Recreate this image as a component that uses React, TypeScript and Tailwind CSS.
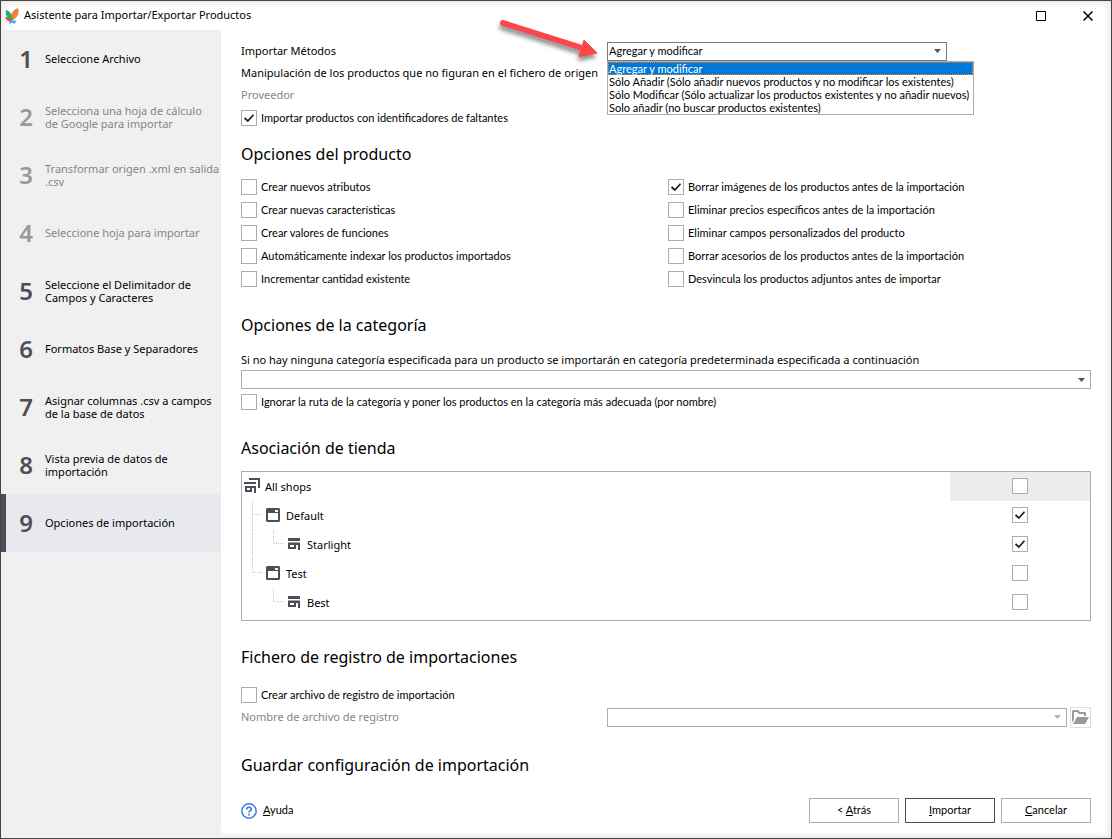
import { useState } from "react";
import type { ReactNode } from "react";

const steps = [
  { id: 1, label: "Seleccione Archivo", enabled: true },
  { id: 2, label: "Selecciona una hoja de cálculo\nde Google para importar", enabled: false },
  { id: 3, label: "Transformar origen .xml en salida .csv", enabled: false },
  { id: 4, label: "Seleccione hoja para importar", enabled: false },
  { id: 5, label: "Seleccione el Delimitador de Campos y Caracteres", enabled: true },
  { id: 6, label: "Formatos Base y Separadores", enabled: true },
  { id: 7, label: "Asignar columnas .csv a campos de la base de datos", enabled: true },
  { id: 8, label: "Vista previa de datos de importación", enabled: true },
  { id: 9, label: "Opciones de importación", enabled: true },
];

const methods = [
  "Agregar y modificar",
  "Sólo Añadir (Sólo añadir nuevos productos y no modificar los existentes)",
  "Sólo Modificar (Sólo actualizar los productos existentes y no añadir nuevos)",
  "Solo añadir (no buscar productos existentes)",
];

const productLeft = [
  "Crear nuevos atributos",
  "Crear nuevas características",
  "Crear valores de funciones",
  "Automáticamente indexar los productos importados",
  "Incrementar cantidad existente",
];

const productRight = [
  "Borrar imágenes de los productos antes de la importación",
  "Eliminar precios específicos antes de la importación",
  "Eliminar campos personalizados del producto",
  "Borrar acesorios de los productos antes de la importación",
  "Desvincula los productos adjuntos antes de importar",
];

// guides: one entry per indent level in front of the icon
const shops = [
  { name: "All shops", icon: "all", guides: [], checked: false },
  { name: "Default", icon: "group", guides: ["tee"], checked: true },
  { name: "Starlight", icon: "shop", guides: ["line", "elbow"], checked: true },
  { name: "Test", icon: "group", guides: ["elbow"], checked: false },
  { name: "Best", icon: "shop", guides: ["none", "elbow"], checked: false },
];

const guidePaths: Record<string, string> = {
  tee: "M10.5 0V29M10.5 13.5H20",
  line: "M10.5 0V29",
  elbow: "M10.5 0V13.5H20",
  none: "",
};

function CheckBox({ checked = false, label }: { checked?: boolean; label?: string }) {
  return (
    <span className="grid size-4 shrink-0">
      <input
        type="checkbox"
        defaultChecked={checked}
        aria-label={label}
        className="peer col-start-1 row-start-1 size-4 appearance-none border border-[#acacac] bg-white"
      />
      <svg viewBox="0 0 16 16" className="pointer-events-none invisible col-start-1 row-start-1 size-4 peer-checked:visible">
        <path d="M3.5 8L6.8 11L12.5 4.7" fill="none" stroke="#1e1e1e" strokeWidth="1.7" />
      </svg>
    </span>
  );
}

function CheckRow({ children, checked }: { children: ReactNode; checked?: boolean }) {
  return (
    <label className="flex h-4 items-center gap-1 font-[Lato,sans-serif] whitespace-nowrap">
      <CheckBox checked={checked} />
      <span className="pb-0.5">{children}</span>
    </label>
  );
}

function Caret({ muted = false }: { muted?: boolean }) {
  return (
    <svg viewBox="0 0 7 4" className={`pointer-events-none col-start-1 row-start-1 mr-1.5 h-1 w-[7px] self-center justify-self-end ${muted ? "text-[#b5b5b5]" : "text-[#555555]"}`}>
      <path d="M0 0H7L3.5 4Z" fill="currentColor" />
    </svg>
  );
}

function ShopIcon({ kind }: { kind: string }) {
  if (kind === "all") {
    return (
      <svg viewBox="0 0 16 15" className="h-[15px] w-4">
        <path d="M5 0H16V10H14V2H5ZM0 4H12V6H0ZM1 8H12V15H10V10H8V14H1ZM3 10V12H6V10Z" fill="#4e4d58" fillRule="evenodd" />
      </svg>
    );
  }
  if (kind === "group") {
    return (
      <svg viewBox="0 0 14 14" className="size-3.5">
        <path d="M1 0H13L14 1V13L13 14H1L0 13V1ZM2 5V12H12V5ZM9 2V4H12V2Z" fill="#4e4d58" fillRule="evenodd" />
      </svg>
    );
  }
  return (
    <svg viewBox="0 0 12 12" className="size-3">
      <path d="M0 0H12V3H0ZM0 4.5H12V12H10V7H8V11H0V4.5ZM2 7V9H6V7Z" fill="#4e4d58" fillRule="evenodd" />
    </svg>
  );
}

function Heading({ children }: { children: ReactNode }) {
  return <h2 className="text-[16px] leading-6">{children}</h2>;
}

export default function App() {
  const [method, setMethod] = useState(methods[0]);

  return (
    <div className="flex min-h-screen flex-col border border-[#444444] bg-white font-['Noto_Sans',sans-serif] text-[11px] leading-[13px] text-black shadow-[inset_0_0_8px_rgba(0,0,0,0.15)]">
      <header className="flex h-[29px] items-center pl-1">
        <svg viewBox="0 0 14 16" className="h-4 w-3.5">
          <path d="M13 0C15 6 12 10 7 12.5C4.5 8 7 2 13 0Z" fill="#f58233" />
          <path d="M1 2C5 3 8 7 7 12.5C2 11 0 7 1 2Z" fill="#1fae7c" />
          <path d="M0 9C3 9 5.5 10.5 7 12.5C5 14.5 1 13 0 9Z" fill="#ef4a3c" />
          <path d="M7 12.5L11.5 12.5L9.5 16L7 14.5L5 16L3.5 14Z" fill="#3fb4ea" />
        </svg>
        <h1 className="ml-[5px] flex-1 pb-[3px]">Asistente para Importar/Exportar Productos</h1>
        <button aria-label="Maximizar" className="flex h-7 w-12 items-center justify-center">
          <svg viewBox="0 0 10 10" className="size-2.5">
            <path d="M.5 .5H9.5V9.5H.5Z" fill="none" stroke="#000" />
          </svg>
        </button>
        <button aria-label="Cerrar" className="flex h-7 w-[46px] items-center justify-center">
          <svg viewBox="0 0 10 10" className="size-2.5">
            <path d="M.5 .5L9.5 9.5M9.5 .5L.5 9.5" fill="none" stroke="#000" strokeWidth="1.5" />
          </svg>
        </button>
      </header>

      <div className="flex flex-1">
        <nav className="w-[220px] shrink-0 bg-[#f0f0f0]">
          <ol>
            {steps.map((s) => (
              <li
                key={s.id}
                className={`flex h-[58px] items-center border-l-5 pb-px ${s.id === 9 ? "border-[#4e4d58] bg-[#e9e8ef]" : "border-transparent"} ${s.enabled ? "text-black" : "text-[#858585]"}`}
              >
                <span className={`w-10 shrink-0 text-center text-[24px] leading-7 font-semibold ${s.enabled ? "text-[#4e4d58]" : "text-[#999999]"}`}>{s.id}</span>
                <span className="-ml-px whitespace-pre-line">{s.label}</span>
              </li>
            ))}
          </ol>
        </nav>

        <main className="min-w-0 flex-1 px-5 pt-2.5 pb-[15px]">
          <div className="grid grid-cols-[366px_340px]">
            <label htmlFor="method" className="flex h-[22px] items-center pb-0.5">Importar Métodos</label>
            <div className="relative grid h-[19px] grid-cols-1 self-center">
              <select
                id="method"
                value={method}
                onChange={(e) => setMethod(e.target.value)}
                className="col-start-1 row-start-1 w-full min-w-0 appearance-none border border-[#7a7a7a] bg-white px-px pb-px font-[Lato,sans-serif]"
              >
                {methods.map((m) => (
                  <option key={m}>{m}</option>
                ))}
              </select>
              <Caret />
              <ul role="listbox" aria-label="Importar Métodos" className="absolute top-full left-0 z-10 w-[367px] border border-[#acacac] bg-white font-[Lato,sans-serif] whitespace-nowrap">
                {methods.map((m) => (
                  <li
                    key={m}
                    role="option"
                    aria-selected={m === method}
                    onClick={() => setMethod(m)}
                    className={`h-[13px] pl-px ${m === method ? "bg-[#0078d7] text-white outline-1 -outline-offset-1 outline-dotted outline-[#ff8728]" : ""}`}
                  >
                    {m}
                  </li>
                ))}
              </ul>
              {/* red pointer towards the drop-down */}
              <svg viewBox="0 0 110 50" className="pointer-events-none absolute right-full -bottom-2 h-[50px] w-[110px] drop-shadow-[-1px_4px_2px_rgba(0,0,0,0.45)]">
                <path d="M6 4L82 28" stroke="#fb4747" strokeWidth="6" strokeLinecap="round" />
                <path d="M87 21L100 34L82 37.5Z" fill="#fb4747" stroke="#fb4747" />
              </svg>
            </div>
          </div>
          <p className="flex h-[22px] items-center pb-0.5 whitespace-nowrap">Manipulación de los productos que no figuran en el fichero de origen</p>
          <p className="flex h-[22px] items-center pb-0.5 text-[#858585]">Proveedor</p>
          <div className="mt-1">
            <CheckRow checked>Importar productos con identificadores de faltantes</CheckRow>
          </div>

          <section className="mt-4">
            <Heading>Opciones del producto</Heading>
            <div className="mt-[13px] grid grid-cols-2 gap-x-1">
              <div className="flex flex-col gap-[7px]">
                {productLeft.map((o) => (
                  <CheckRow key={o}>{o}</CheckRow>
                ))}
              </div>
              <div className="flex flex-col gap-[7px]">
                {productRight.map((o, i) => (
                  <CheckRow key={o} checked={i === 0}>{o}</CheckRow>
                ))}
              </div>
            </div>
          </section>

          <section className="mt-[26px]">
            <Heading>Opciones de la categoría</Heading>
            <label htmlFor="category" className="mt-[13px] flex h-5 items-center pb-0.5">
              Si no hay ninguna categoría especificada para un producto se importarán en categoría predeterminada especificada a continuación
            </label>
            <div className="grid h-[19px]">
              <select id="category" className="col-start-1 row-start-1 appearance-none border border-[#acacac] bg-white px-px" />
              <Caret />
            </div>
            <div className="mt-[5px]">
              <CheckRow>Ignorar la ruta de la categoría y poner los productos en la categoría más adecuada (por nombre)</CheckRow>
            </div>
          </section>

          <section className="mt-[26px]">
            <Heading>Asociación de tienda</Heading>
            <div className="mt-[11px] border border-[#acacac] pb-[3px]">
              <table className="w-full border-collapse">
                <tbody>
                  {shops.map((s, i) => (
                    <tr key={s.name} className="h-[29px]">
                      <td className="p-0">
                        <div className="flex h-[29px] items-center">
                          {s.guides.map((g, n) => (
                            <svg key={n} viewBox="0 0 21 29" className="h-[29px] w-[21px] shrink-0">
                              <path d={guidePaths[g]} fill="none" stroke="#c8c8c8" strokeDasharray="1 1" />
                            </svg>
                          ))}
                          <span className="flex w-5 shrink-0 justify-center pb-0.5">
                            <ShopIcon kind={s.icon} />
                          </span>
                          <span className="ml-[3px]">{s.name}</span>
                        </div>
                      </td>
                      <td className={`w-[140px] p-0 ${i === 0 ? "bg-[#ececec]" : ""}`}>
                        <div className="flex justify-center pb-px">
                          <CheckBox checked={s.checked} label={s.name} />
                        </div>
                      </td>
                    </tr>
                  ))}
                </tbody>
              </table>
            </div>
          </section>

          <section className="mt-6">
            <Heading>Fichero de registro de importaciones</Heading>
            <div className="mt-[18px]">
              <CheckRow>Crear archivo de registro de importación</CheckRow>
            </div>
            <div className="mt-[3px] grid grid-cols-[366px_1fr_21px] items-center">
              <label htmlFor="logfile" className="flex h-[22px] items-center pb-0.5 text-[#858585]">Nombre de archivo de registro</label>
              <div className="mr-[3px] grid h-[19px]">
                <select id="logfile" disabled className="col-start-1 row-start-1 appearance-none border border-[#acacac] bg-white" />
                <Caret muted />
              </div>
              <button aria-label="Abrir carpeta" className="flex size-[21px] items-center justify-center border border-[#dddddd]">
                <svg viewBox="0 0 17 14" className="h-3.5 w-[17px] shrink-0">
                  <path d="M0 13V1L1 0H6L8 2H13L14 3V6H12V4H7L5 2H2V9L0 13Z" fill="#999999" />
                  <path d="M5 7H17L13 14H1Z" fill="#999999" />
                </svg>
              </button>
            </div>
          </section>

          <section className="mt-[25px]">
            <Heading>Guardar configuración de importación</Heading>
          </section>

          <footer className="mt-[21px] flex h-[25px] items-center justify-between font-[Lato,sans-serif]">
            <a href="#ayuda" className="flex items-center gap-1.5">
              <svg viewBox="0 0 16 16" className="size-4">
                <circle cx="8" cy="8" r="7.2" fill="none" stroke="#3a7be0" strokeWidth="1.5" />
                <path d="M5.7 6.4C5.7 3.6 10.3 3.6 10.3 6.2C10.3 7.8 8 7.9 8 9.6M8 10.8V12.4" fill="none" stroke="#3a7be0" strokeWidth="1.7" />
              </svg>
              <span className="pb-0.5"><u>A</u>yuda</span>
            </a>
            <div className="flex gap-1.5">
              <button className="h-[25px] w-[90px] border border-[#acacac] pb-0.5">&lt; <u>A</u>trás</button>
              <button className="h-[25px] w-[90px] border border-[#4e4d58] pb-0.5"><u>I</u>mportar</button>
              <button className="h-[25px] w-[90px] border border-[#acacac] pb-0.5"><u>C</u>ancelar</button>
            </div>
          </footer>
        </main>
      </div>
    </div>
  );
}
